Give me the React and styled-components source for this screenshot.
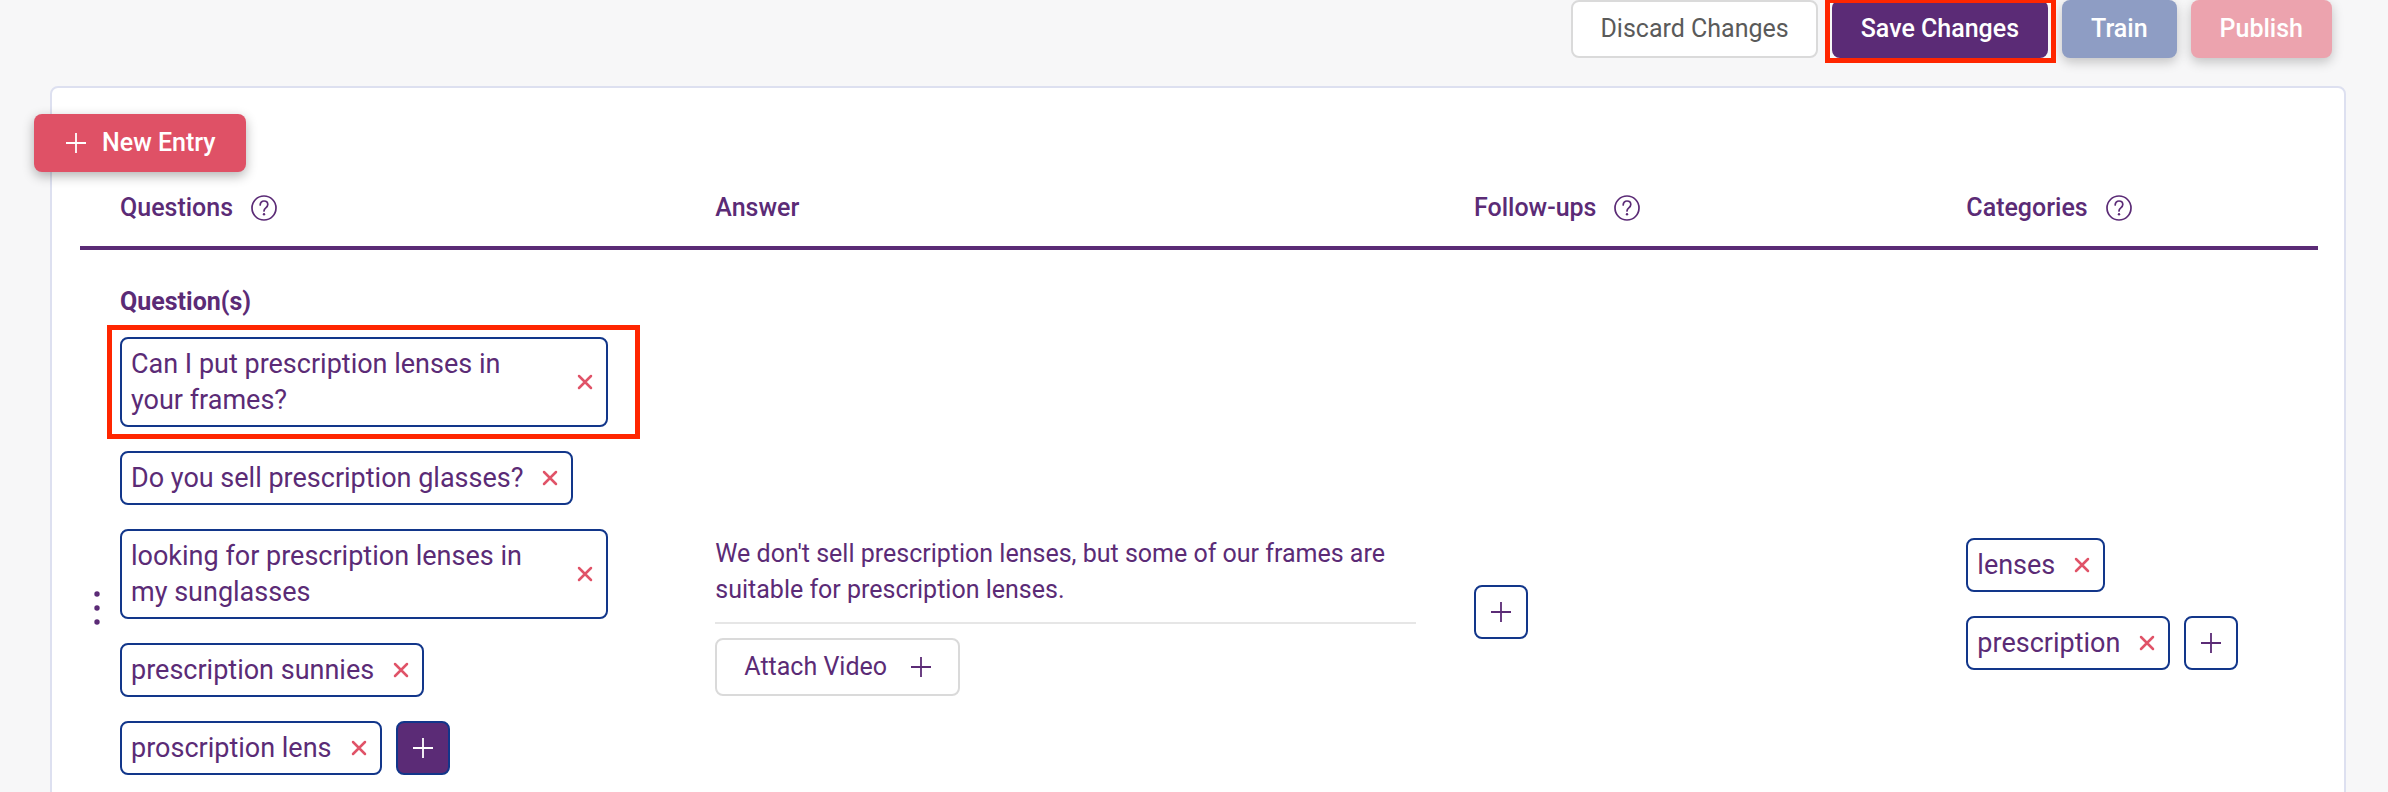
import React from 'react';
import styled, { createGlobalStyle, css } from 'styled-components';

const questions = [
    'Can I put prescription lenses in your frames?',
    'Do you sell prescription glasses?',
    'looking for prescription lenses in my sunglasses',
    'prescription sunnies',
    'proscription lens',
];

const categories = ['lenses', 'prescription'];

const PlusIcon = () => (
    <svg width="20" height="20" viewBox="0 0 20 20" fill="none" stroke="currentColor" strokeWidth="1.8" aria-hidden="true">
        <path d="M10 0v20M0 10h20" />
    </svg>
);

const CrossIcon = () => (
    <svg width="16" height="16" viewBox="0 0 16 16" fill="none" stroke="currentColor" strokeWidth="2.5" strokeLinecap="round" aria-hidden="true">
        <path d="M2 2l12 12M14 2L2 14" />
    </svg>
);

const HelpIcon = () => (
    <svg width="26" height="26" viewBox="0 0 26 26" fill="none" stroke="currentColor" strokeWidth="1.7" strokeLinecap="round" aria-hidden="true">
        <circle cx="13" cy="13" r="12" />
        <path d="M9.2 9.9c0-2.3 1.6-3.9 3.8-3.9s3.8 1.5 3.8 3.5c0 1.6-.9 2.4-2 3.3-1.1.9-1.8 1.6-1.8 3.2" />
        <circle cx="13" cy="19.3" r="1.2" fill="currentColor" stroke="none" />
    </svg>
);

const DotsIcon = () => (
    <svg width="6" height="34" viewBox="0 0 6 34" fill="currentColor" aria-hidden="true">
        <circle cx="3" cy="3" r="2.7" />
        <circle cx="3" cy="17" r="2.7" />
        <circle cx="3" cy="31" r="2.7" />
    </svg>
);

const RemovableTag = ({ text }) => (
    <Tag>
        <span>{text}</span>
        <RemoveButton type="button" aria-label={`Remove ${text}`}><CrossIcon /></RemoveButton>
    </Tag>
);

const HeadCell = ({ label, help }) => (
    <th scope="col">
        <HeadLabel>
            {label}
            {help && <IconButton type="button" aria-label={`About ${label}`}><HelpIcon /></IconButton>}
        </HeadLabel>
    </th>
);

const App = () => {
    return (
        <Page>
            <GlobalStyle />
            <Toolbar>
                <Button type="button" $variant="outline">Discard Changes</Button>
                <SaveHighlight>
                    <Button type="button" $variant="primary">Save Changes</Button>
                </SaveHighlight>
                <Button type="button" $variant="train">Train</Button>
                <Button type="button" $variant="publish">Publish</Button>
            </Toolbar>

            <Card>
                <NewEntryButton type="button" $variant="danger"><PlusIcon />New Entry</NewEntryButton>
                <EntryTable>
                    <colgroup>
                        <col className="handle" />
                        <col className="questions" />
                        <col className="answer" />
                        <col className="followups" />
                        <col />
                    </colgroup>
                    <thead>
                        <tr>
                            <td />
                            <HeadCell label="Questions" help />
                            <HeadCell label="Answer" />
                            <HeadCell label="Follow-ups" help />
                            <HeadCell label="Categories" help />
                        </tr>
                    </thead>
                    <tbody>
                        <tr>
                            <HandleCell>
                                <IconButton type="button" aria-label="Entry options"><DotsIcon /></IconButton>
                            </HandleCell>
                            <QuestionsCell>
                                <GroupTitle>Question(s)</GroupTitle>
                                <TagList>
                                    {questions.map((question, index) => (
                                        <li key={question}>
                                            {index === 0
                                                ? <TagHighlight><RemovableTag text={question} /></TagHighlight>
                                                : <RemovableTag text={question} />}
                                            {index === questions.length - 1 && (
                                                <AddButton type="button" $filled aria-label="Add question"><PlusIcon /></AddButton>
                                            )}
                                        </li>
                                    ))}
                                </TagList>
                            </QuestionsCell>
                            <td>
                                <Answer>
                                    <p>We don't sell prescription lenses, but some of our frames are suitable for prescription lenses.</p>
                                    <Button type="button" $variant="attach">Attach Video<PlusIcon /></Button>
                                </Answer>
                            </td>
                            <FollowUpsCell>
                                <AddButton type="button" aria-label="Add follow-up"><PlusIcon /></AddButton>
                            </FollowUpsCell>
                            <td>
                                <TagList $spaced>
                                    {categories.map((category, index) => (
                                        <li key={category}>
                                            <RemovableTag text={category} />
                                            {index === categories.length - 1 && (
                                                <AddButton type="button" aria-label="Add category"><PlusIcon /></AddButton>
                                            )}
                                        </li>
                                    ))}
                                </TagList>
                            </td>
                        </tr>
                    </tbody>
                </EntryTable>
            </Card>
        </Page>
    );
};

const GlobalStyle = createGlobalStyle`
    *{
        box-sizing: border-box;
    }
    body{
        margin: 0;
        background: #f7f7f8;
        color: #5b2b76;
        font-family: Roboto, 'Liberation Sans', sans-serif;
        font-size: 25px;
        line-height: 36px;
    }
    button{
        font: inherit;
        cursor: pointer;
    }
    svg{
        display: block;
        flex-shrink: 0;
    }
`;

const Page = styled.main`
    height: 100vh;
    overflow: hidden;
`;

const Toolbar = styled.header`
    display: flex;
    justify-content: flex-end;
    gap: 14px;
    padding-right: 56px;
    margin-bottom: 28px;
`;

const variants = {
    outline: css`
        background: #fff;
        border-color: #dadada;
        color: #5a5a5a;
    `,
    attach: css`
        background: #fff;
        border-color: #dadada;
        color: #5b2b76;
        gap: 24px;
    `,
    primary: css`
        background: #5b2b76;
        font-weight: 500;
    `,
    train: css`
        background: #8e9dc4;
        font-weight: 500;
        box-shadow: 0 4px 12px rgba(0, 0, 0, 0.22);
    `,
    publish: css`
        background: #eca3ae;
        font-weight: 500;
        box-shadow: 0 4px 12px rgba(0, 0, 0, 0.22);
    `,
    danger: css`
        background: #df5166;
        font-weight: 500;
        box-shadow: 0 4px 12px rgba(0, 0, 0, 0.3);
    `,
};

const Button = styled.button`
    display: inline-flex;
    align-items: center;
    justify-content: center;
    height: 58px;
    padding: 0 27px;
    border: 2px solid transparent;
    border-radius: 8px;
    color: #fff;
    white-space: nowrap;
    ${({ $variant }) => variants[$variant]}
`;

const NewEntryButton = styled(Button)`
    position: relative;
    gap: 16px;
    padding: 0 28px 0 30px;
    margin-left: -46px;
`;

const SaveHighlight = styled.div`
    position: relative;
    &::after{
        content: '';
        position: absolute;
        inset: 0 -8px -5px -7px;
        border: 5px solid #ff2600;
        border-top-width: 3px;
        pointer-events: none;
    }
`;

const Card = styled.section`
    min-height: 100%;
    margin: 0 42px 0 50px;
    padding: 26px 26px 0 28px;
    border: 2px solid #dde0f0;
    border-radius: 8px;
    background: #fff;
`;

const EntryTable = styled.table`
    width: 100%;
    table-layout: fixed;
    border-collapse: collapse;
    .handle{
        width: 40px;
    }
    .questions{
        width: 26.6%;
    }
    .answer{
        width: 33.9%;
    }
    .followups{
        width: 22%;
    }
    th, td{
        padding: 0;
        text-align: left;
        vertical-align: middle;
    }
    thead tr{
        height: 76px;
        border-bottom: 4px solid #5b2b76;
    }
    tbody tr{
        height: 734px;
    }
`;

const HeadLabel = styled.div`
    display: flex;
    align-items: center;
    gap: 18px;
    padding-bottom: 2px;
    font-weight: 500;
`;

const IconButton = styled.button`
    padding: 0;
    border: 0;
    background: none;
    color: #5b2b76;
`;

const HandleCell = styled.td`
    && {
        padding: 0 0 6px 14px;
    }
`;

const QuestionsCell = styled.td`
    && {
        padding: 34px 107px 0 0;
        vertical-align: top;
    }
`;

const FollowUpsCell = styled.td`
    && {
        padding-bottom: 8px;
    }
`;

const GroupTitle = styled.h2`
    margin: 0 0 17px;
    font-size: 25px;
    font-weight: 700;
    line-height: 36px;
`;

const TagList = styled.ul`
    display: flex;
    flex-direction: column;
    gap: 24px;
    margin: 0;
    padding: 0 0 ${({ $spaced }) => ($spaced ? '24px' : '0')};
    list-style: none;
    li{
        display: flex;
        gap: 14px;
    }
`;

const Tag = styled.div`
    display: flex;
    align-items: center;
    gap: 19px;
    padding: 7px 13px 7px 9px;
    border: 2px solid #12368a;
    border-radius: 8px;
    background: #fff;
    font-size: 27px;
    line-height: 36px;
`;

const TagHighlight = styled.div`
    position: relative;
    &::after{
        content: '';
        position: absolute;
        inset: -12px -32px -12px -13px;
        border: 5px solid #ff2600;
        pointer-events: none;
    }
`;

const RemoveButton = styled(IconButton)`
    color: #e05368;
`;

const AddButton = styled.button`
    display: flex;
    align-items: center;
    justify-content: center;
    width: 54px;
    height: 54px;
    padding: 0;
    border: 2px solid #12368a;
    border-radius: 8px;
    background: ${({ $filled }) => ($filled ? '#5b2b76' : '#fff')};
    color: ${({ $filled }) => ($filled ? '#fff' : '#5b2b76')};
`;

const Answer = styled.div`
    padding-right: 58px;
    p{
        margin: 0 0 14px;
        padding-bottom: 14px;
        border-bottom: 2px solid #e6e6e6;
    }
`;

export default App;
